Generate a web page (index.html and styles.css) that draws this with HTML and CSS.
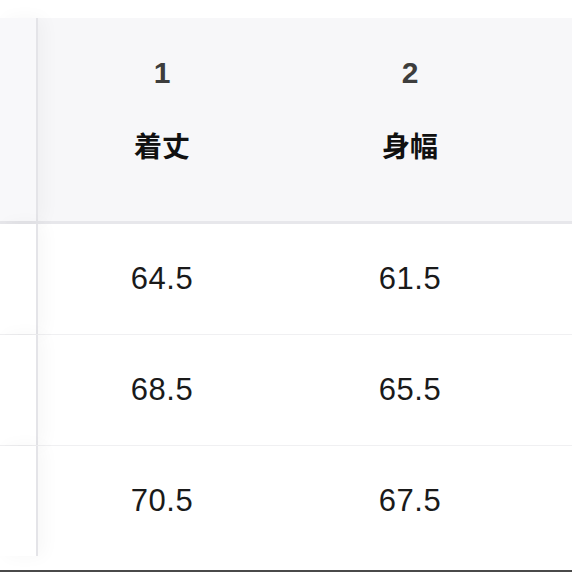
FILE: index.html
```html
<!DOCTYPE html>
<html lang="ja">
<head>
<meta charset="utf-8">
<title>サイズ表</title>
<link rel="stylesheet" href="styles.css">
</head>
<body>
<div class="page">
  <div class="table">
    <div class="row head">
      <div class="stub"></div>
      <div class="cell hcell"><span class="num">1</span><span class="label">着丈</span></div>
      <div class="cell hcell"><span class="num">2</span><span class="label">身幅</span></div>
      <div class="cell hcell"></div>
    </div>
    <div class="row body first">
      <div class="stub"></div>
      <div class="cell val">64.5</div>
      <div class="cell val">61.5</div>
      <div class="cell val"></div>
    </div>
    <div class="row body">
      <div class="stub"></div>
      <div class="cell val">68.5</div>
      <div class="cell val">65.5</div>
      <div class="cell val"></div>
    </div>
    <div class="row body">
      <div class="stub"></div>
      <div class="cell val">70.5</div>
      <div class="cell val">67.5</div>
      <div class="cell val"></div>
    </div>
  </div>
  <div class="spacer"></div>
  <div class="bar"></div>
</div>
</body>
</html>
```
FILE: styles.css
```css
html, body {
  margin: 0;
  padding: 0;
  background: #ffffff;
}
.page {
  width: 572px;
  height: 572px;
  overflow: hidden;
  display: flex;
  flex-direction: column;
  padding-top: 18px;
  box-sizing: border-box;
  font-family: "Liberation Sans", Arial, "Noto Sans CJK JP", sans-serif;
}
.table {
  display: flex;
  flex-direction: column;
}
.row {
  display: flex;
  flex: none;
}
.stub {
  width: 36px;
  flex: none;
  border-right: 2px solid #e4e4e8;
  position: relative;
  z-index: 1;
  box-shadow: 6px 0 18px rgba(0, 0, 0, 0.035);
}
.cell {
  width: 248px;
  flex: none;
}
.head {
  height: 203px;
  background: #f7f7f9;
  border-bottom: 3px solid #e7e7eb;
}
.head .stub {
  background: #f8f8fa;
}
.hcell {
  display: flex;
  flex-direction: column;
  align-items: center;
  padding-top: 37px;
  box-sizing: border-box;
  gap: 36px;
}
.num {
  font-size: 30px;
  line-height: 36px;
  font-weight: 700;
  color: #3d3d3d;
}
.label {
  font-family: "Noto Sans CJK JP", sans-serif;
  font-size: 28px;
  line-height: 36px;
  font-weight: 700;
  color: #111111;
}
.body {
  height: 110px;
  border-top: 1px solid #f0f0f2;
  background: #ffffff;
}
.body.first {
  border-top: none;
}
.body .stub {
  background: #ffffff;
}
.val {
  display: flex;
  align-items: center;
  justify-content: center;
  font-size: 31px;
  color: #1a1a1a;
  letter-spacing: 0.5px;
}
.spacer {
  flex: 1;
}
.bar {
  height: 2px;
  background: #4a4a4a;
  flex: none;
}
```
